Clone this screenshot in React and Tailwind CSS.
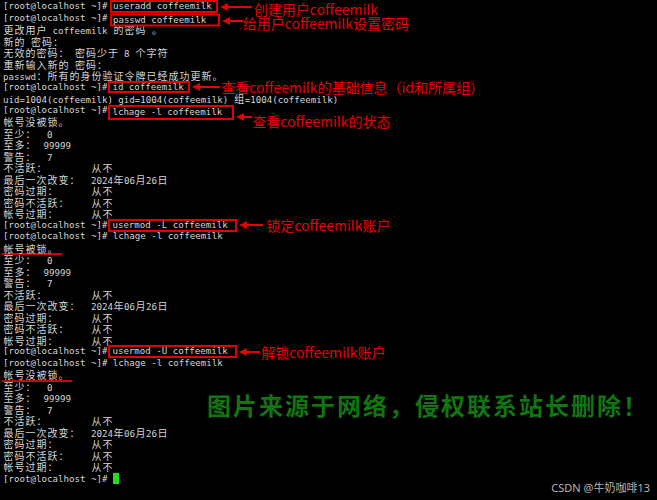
const PROMPT = '[root@localhost ~]#';
const P = PROMPT + ' ';

const isWide = (ch) => /[\u3000-\u303f\u4e00-\u9fff\uff00-\uffef]/.test(ch);

// terminal cells: CJK glyphs take two columns
function Cells({ text }) {
  const out = [];
  let buf = '';
  [...text].forEach((ch, i) => {
    if (isWide(ch)) {
      if (buf) {
        out.push(<span key={'a' + i}>{buf}</span>);
        buf = '';
      }
      out.push(
        <span key={i} className="inline-block w-[11px] text-center text-[10px] [font-family:'Noto_Sans_CJK_SC',sans-serif]">
          {ch}
        </span>
      );
    } else buf += ch;
  });
  if (buf) out.push(<span key="end">{buf}</span>);
  return out;
}

function Arrow({ w, className }) {
  return (
    <svg className={`shrink-0 ${className}`} width={w} height="10">
      <line x1="6" y1="5" x2={w} y2="5" stroke="#e80000" strokeWidth="2" />
      <polygon points="0,5 8,1 8,9" fill="#e80000" />
    </svg>
  );
}

// boxed command + red arrow + note, as in the annotated screenshot
function Annotated({ cmd, box, arrow, arrowCls, label, labelCls }) {
  return (
    <div className="flex items-center h-[11.5px] leading-[11.5px] whitespace-pre">
      <Cells text={PROMPT} />
      <span className={`flex items-center shrink-0 border-2 border-[#e00000] ${box}`}>{cmd}</span>
      <Arrow w={arrow} className={arrowCls} />
      <span
        className={`shrink-0 text-[14px] leading-[18px] text-[#e80000] [font-family:'Noto_Sans_CJK_SC',sans-serif] ${labelCls}`}
      >
        {label}
      </span>
    </div>
  );
}

function Underlined({ text, className }) {
  return (
    <span className={`inline-block h-[12.5px] align-top -ml-[1px] pl-[1px] border-b-2 border-[#cc0000] ${className}`}>
      <Cells text={text} />
    </span>
  );
}

const status = (first) => [
  first,
  '至少：  0',
  <>
    <Cells text="至多： " />
    <span className="pl-[2px]">99999</span>
  </>,
  '警告：  7',
  '不活跃：        从不',
  '最后一次改变：  2024年06月26日',
  '密码过期：      从不',
  '密码不活跃：    从不',
  '帐号过期：      从不',
];

const lines = [
  <Annotated
    cmd="useradd coffeemilk"
    box="ml-[2.5px] pl-[1px] pr-[4px] h-[13px]"
    arrow={32}
    arrowCls="ml-[2px]"
    label="创建用户coffeemilk"
    labelCls="ml-[2px] translate-y-[2px]"
  />,
  <Annotated
    cmd="passwd coffeemilk"
    box="ml-[2.5px] pl-[1px] pr-[11.5px] h-[13px] translate-y-[1.5px]"
    arrow={21}
    arrowCls="ml-[2px] translate-y-[3px]"
    label="给用户coffeemilk设置密码"
    labelCls="translate-y-[5px]"
  />,
  '更改用户 coffeemilk 的密码 。',
  '新的 密码：',
  '无效的密码： 密码少于 8 个字符',
  '重新输入新的 密码：',
  'passwd：所有的身份验证令牌已经成功更新。',
  <Annotated
    cmd="id coffeemilk"
    box="ml-[0.5px] pl-[2.5px] pr-[4.5px] h-[12px]"
    arrow={28}
    arrowCls="ml-[2px]"
    label="查看coffeemilk的基础信息（id和所属组）"
    labelCls="ml-[1px]"
  />,
  'uid=1004(coffeemilk) gid=1004(coffeemilk) 组=1004(coffeemilk)',
  <Annotated
    cmd="lchage -l coffeemilk"
    box="ml-[0.5px] pl-[2.5px] pr-[10px] h-[15px] translate-y-[2px]"
    arrow={16}
    arrowCls="ml-[2px] translate-y-[7px]"
    label="查看coffeemilk的状态"
    labelCls="translate-y-[11px]"
  />,
  ...status('帐号没被锁。'),
  <Annotated
    cmd="usermod -L coffeemilk"
    box="ml-[0.5px] pl-[2.5px] pr-[7.5px] h-[13px]"
    arrow={24}
    arrowCls="ml-[2px]"
    label="锁定coffeemilk账户"
    labelCls="ml-[3px]"
  />,
  P + 'lchage -l coffeemilk',
  ...status(<Underlined text="帐号被锁。" className="pr-[4px]" />),
  <Annotated
    cmd="usermod -U coffeemilk"
    box="ml-[0.5px] pl-[2.5px] pr-[7.5px] h-[13px]"
    arrow={21}
    arrowCls="ml-[2px]"
    label="解锁coffeemilk账户"
    labelCls="ml-[1px]"
  />,
  P + 'lchage -l coffeemilk',
  ...status(<Underlined text="帐号没被锁。" className="pr-[3px]" />),
  <>
    <Cells text={P} />
    <span className="inline-block w-[6px] h-[11px] align-[-2px] bg-[#22dd22]" />
  </>,
];

export default function App() {
  return (
    <div className="relative w-[657px] h-[500px] overflow-hidden bg-black">
      {/* terminal */}
      <div className="pt-[1px] pl-[3px] text-[9.15px] text-[#d4d4d4] [font-family:'DejaVu_Sans_Mono','Noto_Sans_CJK_SC',monospace]">
        {lines.map((line, i) =>
          line.type === Annotated ? (
            <div key={i}>{line}</div>
          ) : (
            <div key={i} className="h-[11.5px] leading-[11.5px] whitespace-pre">
              {typeof line === 'string' ? <Cells text={line} /> : line}
            </div>
          )
        )}
      </div>

      {/* watermarks over the screenshot */}
      <div className="absolute left-[207px] top-[391px] whitespace-nowrap text-[24px] leading-[28px] font-bold tracking-[2px] text-[#117511] [font-family:'Noto_Sans_CJK_SC',sans-serif]">
        图片来源于网络，侵权联系站长删除！
      </div>
      <div className="absolute right-[7px] bottom-[5px] whitespace-nowrap text-[11px] leading-[14px] text-[#b4b4b4] [font-family:'Noto_Sans','Noto_Sans_CJK_SC',sans-serif]">
        CSDN @牛奶咖啡13
      </div>
    </div>
  );
}
